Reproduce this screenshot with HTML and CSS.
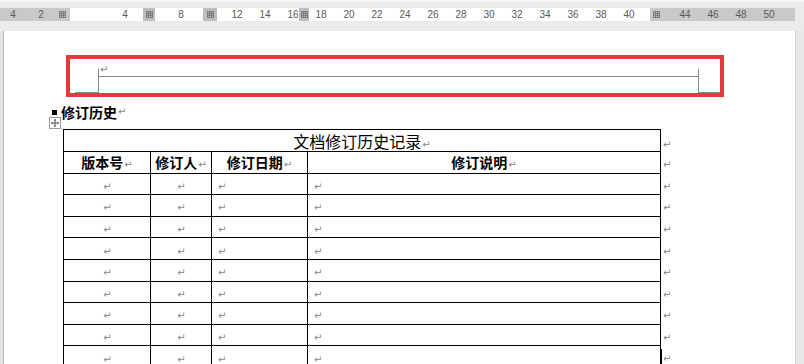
FILE: index.html
```html
<!DOCTYPE html>
<html lang="zh-CN">
<head>
    <meta charset="utf-8">
    <title>修订历史</title>
    <link rel="stylesheet" href="styles.css">
</head>
<body>
<div class="ruler-bar">
    <div class="ruler">
        <div class="ruler-scale">
            <span>4</span><span>2</span><span></span><span></span><span>4</span><span></span><span>8</span><span></span>
            <span>12</span><span>14</span><span>16</span><span>18</span><span>20</span><span>22</span><span>24</span>
            <span>26</span><span>28</span><span>30</span><span>32</span><span>34</span><span>36</span><span>38</span>
            <span>40</span><span></span><span>44</span><span>46</span><span>48</span><span>50</span>
        </div>
        <i class="tab-mark mark-a"></i>
        <i class="tab-mark mark-b"></i>
        <i class="tab-mark mark-c"></i>
        <i class="tab-mark mark-d"></i>
        <i class="tab-mark mark-e"></i>
    </div>
</div>

<div class="workspace">
    <div class="page">
        <div class="header-box">
            <div class="corner corner-left"></div>
            <div class="header-line"><span class="pm">↵</span></div>
            <div class="corner corner-right"></div>
        </div>

        <p class="heading"><span class="bullet"></span>修订历史<span class="pm">↵</span></p>

        <div class="table-wrap">
            <span class="move-handle">
                <svg width="12" height="12" viewBox="0 0 12 12">
                    <rect x="0.5" y="0.5" width="11" height="11" fill="#fff" stroke="#9a9a9a"/>
                    <path d="M6 2.5v7M2.5 6h7" stroke="#555" stroke-width="1"/>
                    <path d="M6 2l-1.5 1.5h3zM6 10l-1.5-1.5h3zM2 6l1.5-1.5v3zM10 6l-1.5-1.5v3z" fill="#555"/>
                </svg>
            </span>
            <table class="history">
                <colgroup>
                    <col class="c-ver"><col class="c-who"><col class="c-date"><col class="c-note"><col class="c-end">
                </colgroup>
                <tr class="title-row">
                    <td colspan="4">文档修订历史记录<span class="pm">↵</span></td>
                    <td class="row-end"><span class="pm">↵</span></td>
                </tr>
                <tr class="head-row">
                    <th>版本号<span class="pm">↵</span></th>
                    <th>修订人<span class="pm">↵</span></th>
                    <th>修订日期<span class="pm">↵</span></th>
                    <th>修订说明<span class="pm">↵</span></th>
                    <td class="row-end"><span class="pm">↵</span></td>
                </tr>
                <tr><td class="mid"><span class="pm">↵</span></td><td class="mid"><span class="pm">↵</span></td><td><span class="pm">↵</span></td><td><span class="pm">↵</span></td><td class="row-end"><span class="pm">↵</span></td></tr>
                <tr><td class="mid"><span class="pm">↵</span></td><td class="mid"><span class="pm">↵</span></td><td><span class="pm">↵</span></td><td><span class="pm">↵</span></td><td class="row-end"><span class="pm">↵</span></td></tr>
                <tr><td class="mid"><span class="pm">↵</span></td><td class="mid"><span class="pm">↵</span></td><td><span class="pm">↵</span></td><td><span class="pm">↵</span></td><td class="row-end"><span class="pm">↵</span></td></tr>
                <tr><td class="mid"><span class="pm">↵</span></td><td class="mid"><span class="pm">↵</span></td><td><span class="pm">↵</span></td><td><span class="pm">↵</span></td><td class="row-end"><span class="pm">↵</span></td></tr>
                <tr><td class="mid"><span class="pm">↵</span></td><td class="mid"><span class="pm">↵</span></td><td><span class="pm">↵</span></td><td><span class="pm">↵</span></td><td class="row-end"><span class="pm">↵</span></td></tr>
                <tr><td class="mid"><span class="pm">↵</span></td><td class="mid"><span class="pm">↵</span></td><td><span class="pm">↵</span></td><td><span class="pm">↵</span></td><td class="row-end"><span class="pm">↵</span></td></tr>
                <tr><td class="mid"><span class="pm">↵</span></td><td class="mid"><span class="pm">↵</span></td><td><span class="pm">↵</span></td><td><span class="pm">↵</span></td><td class="row-end"><span class="pm">↵</span></td></tr>
                <tr><td class="mid"><span class="pm">↵</span></td><td class="mid"><span class="pm">↵</span></td><td><span class="pm">↵</span></td><td><span class="pm">↵</span></td><td class="row-end"><span class="pm">↵</span></td></tr>
                <tr><td class="mid"><span class="pm">↵</span></td><td class="mid"><span class="pm">↵</span></td><td><span class="pm">↵</span></td><td><span class="pm">↵</span></td><td class="row-end"><span class="cursor"></span><span class="pm">↵</span></td></tr>
            </table>
        </div>
    </div>
    <div class="scrollbar"></div>
</div>
</body>
</html>
```

FILE: styles.css
```css
html, body {
    margin: 0;
    height: 100%;
    overflow: hidden;
}

body {
    background-color: #e4e4e4;
    font-family: "Noto Sans CJK SC", "Liberation Sans", sans-serif;
    color: #000;
}

/* ruler */

.ruler-bar {
    height: 31px;
    box-sizing: border-box;
    padding-top: 8px;
    background-color: #ebebeb;
    border-top: 2px solid #f4f4f4;
}

.ruler {
    position: relative;
    width: 795px;
    height: 13px;
    margin-top: -2px;
    background: linear-gradient(to right, #c9c9c9 70px, #fff 70px, #fff 650px, #c9c9c9 650px);
}

.ruler-scale {
    display: flex;
    margin-left: -1px;
    height: 13px;
    font-family: "Liberation Sans", sans-serif;
    font-size: 10px;
    line-height: 13px;
    color: #5a5a5a;
}

.ruler-scale span {
    width: 28px;
    flex: none;
    text-align: center;
}

.tab-mark {
    position: absolute;
    top: 0;
    height: 13px;
    background-color: #bdbdbd;
    background-image:
        repeating-linear-gradient(to right, #7d7d7d 0 1px, transparent 1px 2px),
        repeating-linear-gradient(to bottom, #7d7d7d 0 1px, transparent 1px 2px);
    background-size: 7px 7px;
    background-position: center;
    background-repeat: no-repeat;
    background-blend-mode: darken;
}

.mark-a { left: 57px; width: 11px; background-color: transparent; }
.mark-b { left: 143px; width: 12px; }
.mark-c { left: 203px; width: 14px; }
.mark-d { left: 299px; width: 10px; }
.mark-e { left: 651px; width: 10px; background-color: transparent; }

/* page area */

.workspace {
    display: flex;
    height: calc(100% - 31px);
}

.page {
    flex: 1;
    margin-left: 3px;
    border-left: 1px solid #b9b9b9;
    background-color: #fff;
}

.scrollbar {
    width: 8px;
    background-color: #e8e8e8;
    border-left: 1px solid #d2d2d2;
}

.pm {
    font-family: "DejaVu Sans", sans-serif;
    font-size: 10px;
    line-height: 1;
    font-weight: normal;
    color: #858585;
    margin-left: 1px;
}

/* header */

.header-box {
    display: flex;
    width: 650px;
    height: 34px;
    margin: 24px 0 0 62px;
    border: 4px solid #e5393e;
}

.corner {
    align-self: flex-end;
    height: 23px;
    border-bottom: 1px solid #8a8a8a;
}

.corner-left {
    width: 23px;
    margin-left: 5px;
    border-right: 1px solid #8a8a8a;
}

.corner-right {
    width: 21px;
    border-left: 1px solid #8a8a8a;
}

.header-line {
    flex: 1;
    height: 17px;
    border-bottom: 1px solid #8a8a8a;
    line-height: 14px;
}

/* heading */

.heading {
    display: flex;
    align-items: center;
    margin: 5px 0 0 48px;
    height: 20px;
    font-size: 14px;
    font-weight: bold;
}

.bullet {
    width: 5px;
    height: 5px;
    margin: 1px 4px 0 0;
    background-color: #000;
}

/* table */

.table-wrap {
    position: relative;
    margin: 7px 0 0 59px;
}

.move-handle {
    position: absolute;
    left: -14px;
    top: -12px;
    width: 12px;
    height: 12px;
}

.move-handle svg {
    display: block;
}

.history {
    border-collapse: collapse;
    table-layout: fixed;
    width: 612px;
}

.c-ver { width: 87px; }
.c-who { width: 61px; }
.c-date { width: 96px; }
.c-note { width: 353px; }
.c-end { width: 15px; }

.history td,
.history th {
    border: 1px solid #000;
    height: 20.6px;
    padding: 0 0 0 5px;
    font-size: 14px;
    line-height: 20px;
    text-align: left;
    white-space: nowrap;
}

.history .mid {
    text-align: center;
    padding: 0;
}

.history th {
    text-align: center;
    padding: 0;
    font-weight: bold;
}

.title-row td {
    text-align: center;
    padding: 0;
    font-size: 16px;
    height: 21px;
}

.history .row-end {
    border: none;
    padding: 0 0 0 1px;
    text-align: left;
}

.cursor {
    display: inline-block;
    width: 1px;
    height: 18px;
    margin: 0 0 0 -1px;
    vertical-align: middle;
    background-color: #000;
}
```
